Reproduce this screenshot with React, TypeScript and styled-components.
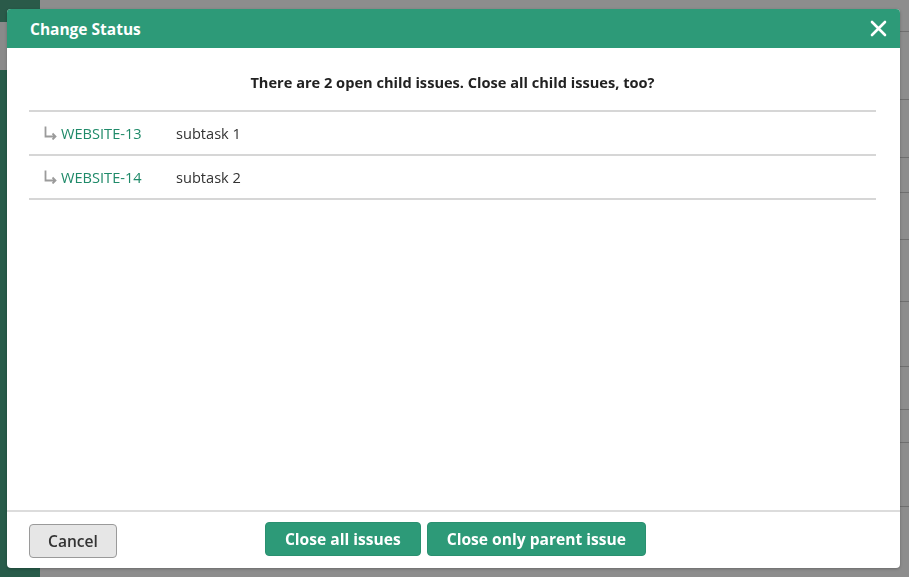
import React from "react";
import styled, { createGlobalStyle } from "styled-components";

const Global = createGlobalStyle`
  html, body { margin: 0; padding: 0; width: 909px; height: 577px; overflow: hidden; }
  body { font-family: "Open Sans", "Noto Sans", sans-serif; background: #8c8c8c; }
  * { box-sizing: border-box; }
`;

const Page = styled.div`
  display: grid;
  grid-template-columns: 40px 1fr;
  width: 909px;
  height: 577px;
`;

const Sidebar = styled.div`
  background: #285c4a;
  display: flex;
  flex-direction: column;
`;

const SidebarTop = styled.div`
  height: 22px;
  background: #2a5a49;
`;

const SidebarGap = styled.div`
  height: 48px;
  width: 7px;
  background: #8a8a8a;
`;

const Content = styled.div`
  background: #8d8d8d;
  display: flex;
  flex-direction: column;
  align-items: flex-end;
`;

const TableEdge = styled.div`
  width: 12px;
  display: flex;
  flex-direction: column;
`;

const EdgeRow = styled.div<{ $h: number }>`
  height: ${(p) => p.$h}px;
  border-bottom: 1px solid #6f6f6f;
`;

const Backdrop = styled.div`
  position: fixed;
  inset: 0;
  padding: 9px 9px 9px 7px;
  display: flex;
`;

const Modal = styled.div`
  flex: 1;
  height: 559px;
  background: #fff;
  border-radius: 4px;
  display: flex;
  flex-direction: column;
  overflow: hidden;
  box-shadow: 0 1px 3px rgba(0, 0, 0, 0.25);
`;

const Header = styled.div`
  height: 39px;
  background: #2d9a78;
  display: flex;
  align-items: center;
  justify-content: space-between;
  padding: 0 12px 0 23px;
`;

const Title = styled.h2`
  margin: 0;
  color: #fff;
  font-size: 15.5px;
  font-weight: 700;
`;

const CloseButton = styled.button`
  border: none;
  background: none;
  padding: 0;
  width: 20px;
  height: 20px;
  display: flex;
  align-items: center;
  justify-content: center;
  cursor: pointer;
`;

const Body = styled.div`
  flex: 1;
  padding: 23px 24px 0 22px;
  display: flex;
  flex-direction: column;
`;

const Question = styled.p`
  margin: 0 0 17px;
  text-align: center;
  font-size: 14.6px;
  font-weight: 700;
  color: #222;
  line-height: 22px;
`;

const Table = styled.div`
  border-top: 2px solid #d6d6d6;
`;

const Row = styled.div`
  height: 44px;
  display: grid;
  grid-template-columns: 132px 1fr;
  align-items: center;
  border-bottom: 2px solid #d6d6d6;
  padding-left: 15px;
  font-size: 14.6px;
`;

const KeyCell = styled.div`
  display: flex;
  align-items: center;
  gap: 4px;
`;

const ArrowIcon = styled.svg`
  display: block;
  flex: none;
  margin-top: -1px;
`;

const IssueLink = styled.a`
  color: #1f8a69;
  text-decoration: none;
`;

const Summary = styled.span`
  color: #333;
`;

const Footer = styled.div`
  border-top: 2px solid #dcdcdc;
  height: 58px;
  display: grid;
  grid-template-columns: 1fr auto 1fr;
  align-items: center;
  padding: 0 22px;
`;

const Actions = styled.div`
  display: flex;
  gap: 6px;
  margin-top: -2px;
  margin-left: 4px;
`;

const Button = styled.button<{ $primary?: boolean }>`
  height: 34px;
  font-family: "Open Sans", "Noto Sans", sans-serif;
  font-size: 15.6px;
  font-weight: 700;
  border-radius: 4px;
  padding: 0 19px;
  cursor: pointer;
  ${(p) =>
    p.$primary
      ? `background: #2d9a78; color: #fff; border: 1px solid #2a9070;`
      : `background: #e6e6e6; color: #333; border: 1px solid #9a9a9a; width: 88px; padding: 0; font-weight: 600;`}
`;

const CancelSlot = styled.div`
  display: flex;
  margin-top: 2px;
`;

const rows = [
  { key: "WEBSITE-13", summary: "subtask 1" },
  { key: "WEBSITE-14", summary: "subtask 2" },
];

export default function App() {
  return (
    <>
      <Global />
      <Page>
        <Sidebar>
          <SidebarTop />
          <SidebarGap />
        </Sidebar>
        <Content>
          <TableEdge>
            {[32, 68, 58, 35, 47, 62, 65, 43, 33, 64].map((h, i) => (
              <EdgeRow key={i} $h={h} />
            ))}
          </TableEdge>
        </Content>
      </Page>
      <Backdrop>
        <Modal>
          <Header>
            <Title>Change Status</Title>
            <CloseButton aria-label="Close">
              <svg width="17" height="17" viewBox="0 0 17 17">
                <path d="M2 2L15 15M15 2L2 15" stroke="#fff" strokeWidth="2.6" strokeLinecap="round" />
              </svg>
            </CloseButton>
          </Header>
          <Body>
            <Question>There are 2 open child issues. Close all child issues, too?</Question>
            <Table>
              {rows.map((r) => (
                <Row key={r.key}>
                  <KeyCell>
                    <ArrowIcon width="13" height="14" viewBox="0 0 13 14">
                      <path
                        d="M1.5 0.5V10.5H11.5M8.5 7.5L11.5 10.5L8.5 13.5"
                        fill="none"
                        stroke="#9b9b9b"
                        strokeWidth="1.8"
                      />
                    </ArrowIcon>
                    <IssueLink href="#">{r.key}</IssueLink>
                  </KeyCell>
                  <Summary>{r.summary}</Summary>
                </Row>
              ))}
            </Table>
          </Body>
          <Footer>
            <CancelSlot>
              <Button>Cancel</Button>
            </CancelSlot>
            <Actions>
              <Button $primary>Close all issues</Button>
              <Button $primary>Close only parent issue</Button>
            </Actions>
            <div />
          </Footer>
        </Modal>
      </Backdrop>
    </>
  );
}
